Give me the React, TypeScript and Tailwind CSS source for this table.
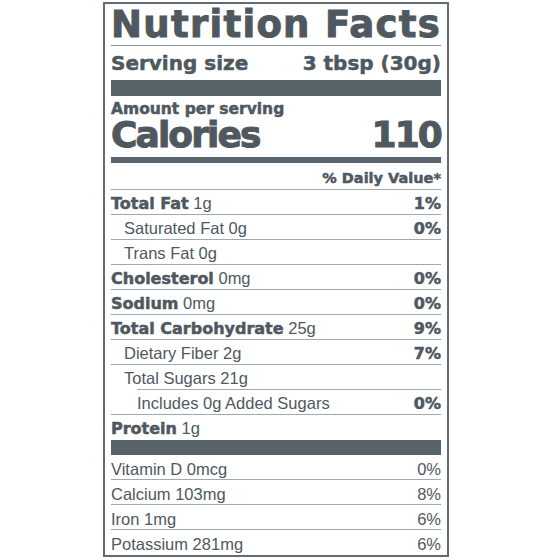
import React from 'react';

const bold = "font-['DejaVu_Sans',sans-serif] font-bold [-webkit-text-stroke:0.5px_#4f585f]";
const heavy = "font-['DejaVu_Sans',sans-serif] font-bold [-webkit-text-stroke:1px_#4f585f]";
const reg = "font-['Liberation_Sans',Arial,sans-serif]";

type Row = {
  label: string;
  amount: string;
  dv?: string;
  strong?: boolean;
  indent?: 0 | 1 | 2;
  lineIndent?: boolean;
};

const rows: Row[] = [
  { label: 'Total Fat', amount: '1g', dv: '1%', strong: true },
  { label: 'Saturated Fat', amount: '0g', dv: '0%', indent: 1 },
  { label: 'Trans Fat', amount: '0g', indent: 1 },
  { label: 'Cholesterol', amount: '0mg', dv: '0%', strong: true },
  { label: 'Sodium', amount: '0mg', dv: '0%', strong: true },
  { label: 'Total Carbohydrate', amount: '25g', dv: '9%', strong: true },
  { label: 'Dietary Fiber', amount: '2g', dv: '7%', indent: 1 },
  { label: 'Total Sugars', amount: '21g', indent: 1, lineIndent: true },
  { label: 'Includes 0g Added Sugars', amount: '', dv: '0%', indent: 2 },
];

const minerals = [
  { label: 'Vitamin D 0mcg', dv: '0%' },
  { label: 'Calcium 103mg', dv: '8%' },
  { label: 'Iron 1mg', dv: '6%' },
  { label: 'Potassium 281mg', dv: '6%' },
];

const indentClass = ['pl-0', 'pl-[13px]', 'pl-[26px]'];

const App: React.FC = () => {
  return (
    <div className="min-h-screen bg-white pt-[2px] pl-[103px] text-[#4f585f]">
      <div className="w-[346px] border-2 border-[#646c72] px-[6px] pb-[1px]">
        <div className={`${heavy} text-[37px] leading-[37px] tracking-[1.3px] mt-[2px] whitespace-nowrap`}>
          Nutrition Facts
        </div>
        <div className="h-px bg-[#8d9398] mt-[2px]" />
        <div className={`${bold} text-[20px] leading-[24px] flex justify-between pt-[5px] pb-[5px]`}>
          <span>Serving size</span>
          <span>3 tbsp (30g)</span>
        </div>
        <div className="h-[16px] bg-[#59636a]" />
        <div className={`${bold} text-[15.5px] leading-[17px] pt-[5px]`}>Amount per serving</div>
        <div className={`${heavy} text-[36px] leading-[32px] tracking-[-1.9px] pt-[1px] flex justify-between`}>
          <span>Calories</span>
          <span>110</span>
        </div>
        <div className="h-[6px] bg-[#59636a] mt-[6px]" />
        <div className={`${bold} text-[14.5px] leading-[18px] text-right pt-[6px] pb-[2px]`}>
          % Daily Value*
        </div>

        {rows.map((r, i) => (
          <div key={i}>
            <div className={`h-px bg-[#a3a8ac] ${rows[i - 1]?.lineIndent ? 'ml-[26px]' : ''}`} />
            <div className={`h-[24px] pt-[2px] flex justify-between items-baseline leading-[22px] ${indentClass[r.indent ?? 0]}`}>
              <span className="whitespace-nowrap">
                {r.strong ? (
                  <span className={`${bold} text-[16px]`}>{r.label}</span>
                ) : (
                  <span className={`${reg} text-[16.5px]`}>{r.label}</span>
                )}
                {r.amount && <span className={`${reg} text-[16.5px]`}> {r.amount}</span>}
              </span>
              {r.dv && <span className={`${bold} text-[16px]`}>{r.dv}</span>}
            </div>
          </div>
        ))}

        <div className="h-px bg-[#a3a8ac]" />
        <div className="h-[25px] pt-[2px] leading-[22px] whitespace-nowrap">
          <span className={`${bold} text-[16px]`}>Protein</span>
          <span className={`${reg} text-[16.5px]`}> 1g</span>
        </div>
        <div className="h-[15px] bg-[#59636a]" />

        {minerals.map((m, i) => (
          <div key={i}>
            {i > 0 && <div className="h-px bg-[#a3a8ac]" />}
            <div className={`${reg} text-[16.5px] h-[24px] pt-[3px] leading-[22px] flex justify-between`}>
              <span>{m.label}</span>
              <span>{m.dv}</span>
            </div>
          </div>
        ))}
      </div>
    </div>
  );
};

export default App;
